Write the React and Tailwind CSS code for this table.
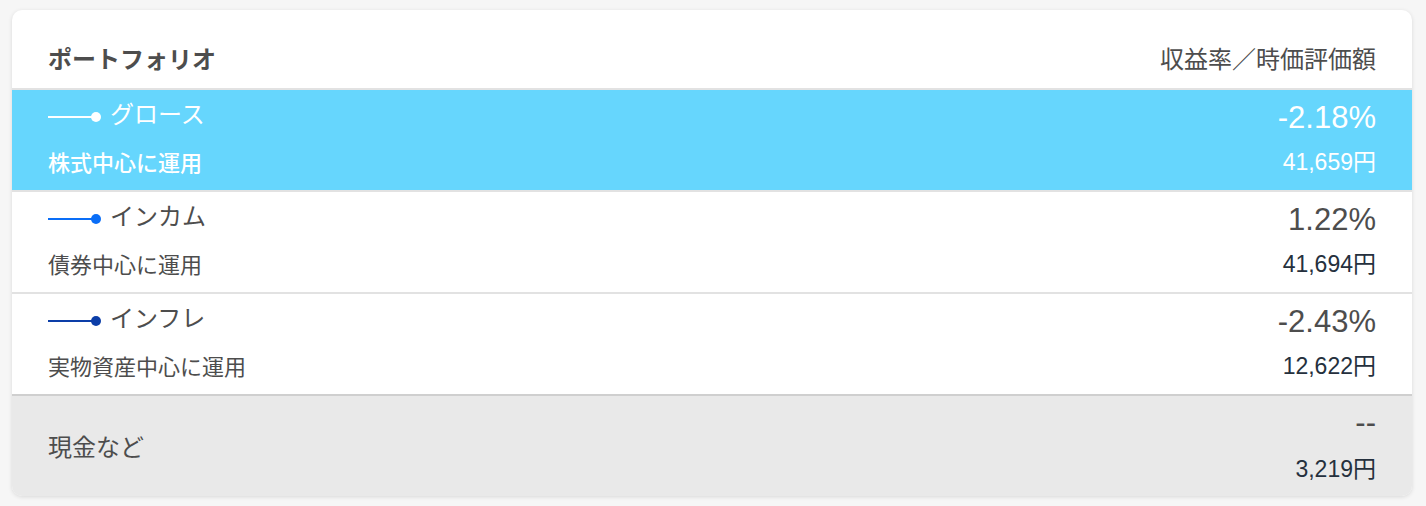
import React from "react";

const jp = { fontFamily: '"Hiragino Sans","Noto Sans CJK JP","Noto Sans",sans-serif' };
const num = { fontFamily: '"Helvetica Neue","Liberation Sans",Arial,"Noto Sans CJK JP",sans-serif' };

function Marker({ color }) {
  return (
    <svg width="54" height="12" viewBox="0 0 54 12" className="shrink-0 translate-y-[4px]">
      <line x1="0" y1="6" x2="44" y2="6" stroke={color} strokeWidth="2" />
      <circle cx="48" cy="6" r="5" fill={color} />
    </svg>
  );
}

function Row({ name, sub, pct, amount, color, active }) {
  const text = active ? "text-white" : "text-[#4d4d4d]";
  return (
    <div className={`h-[100px] px-9 pt-[6px] flex flex-col ${active ? "bg-[#66d6fd]" : "bg-white"}`}>
      <div className="h-[34px] flex items-center justify-between">
        <div className="flex items-center gap-[8px]">
          <Marker color={color} />
          <span className={`text-[24px] leading-none ${text}`} style={jp}>{name}</span>
        </div>
        <span className={`text-[31px] leading-none font-light ${text} translate-y-[4px]`} style={num}>{pct}</span>
      </div>
      <div className="h-[30px] mt-[16px] flex items-center justify-between">
        <span className={`text-[22px] leading-none ${text} ${active ? "font-medium" : ""}`} style={jp}>{sub}</span>
        <span className={`text-[23px] leading-none ${active ? "text-white" : "text-[#25303d]"}`} style={num}>
          {amount}<span style={jp}>円</span>
        </span>
      </div>
    </div>
  );
}

export default function App() {
  return (
    <div className="min-h-[506px] bg-[#f6f6f6] pt-[10px] px-[12px]">
      <div className="w-[1400px] rounded-[10px] bg-white overflow-hidden shadow-[0_1px_4px_rgba(0,0,0,0.12)]">
        <div className="h-[78px] px-9 flex items-center justify-between pt-[18px]">
          <span className="text-[24px] font-bold text-[#4d4d4d] leading-none" style={jp}>ポートフォリオ</span>
          <span className="text-[24px] text-[#4d4d4d] leading-none" style={jp}>収益率／時価評価額</span>
        </div>
        <div className="h-[2px] bg-[#e2e2e2]" />
        <Row name="グロース" sub="株式中心に運用" pct="-2.18%" amount="41,659" color="#ffffff" active />
        <div className="h-[2px] bg-[#e2e2e2]" />
        <Row name="インカム" sub="債券中心に運用" pct="1.22%" amount="41,694" color="#0a6ef7" />
        <div className="h-[2px] bg-[#e2e2e2]" />
        <Row name="インフレ" sub="実物資産中心に運用" pct="-2.43%" amount="12,622" color="#0c3ea8" />
        <div className="h-[2px] bg-[#cfcfcf]" />
        <div className="h-[100px] bg-[#e9e9e9] px-9 flex items-center justify-between">
          <span className="text-[24px] text-[#4d4d4d] leading-none" style={jp}>現金など</span>
          <div className="flex flex-col items-end -translate-y-[3px]">
            <span className="text-[31px] leading-none font-light text-[#4d4d4d] h-[34px] flex items-center" style={num}>--</span>
            <span className="text-[23px] leading-none text-[#25303d] mt-[16px]" style={num}>
              3,219<span style={jp}>円</span>
            </span>
          </div>
        </div>
      </div>
    </div>
  );
}
